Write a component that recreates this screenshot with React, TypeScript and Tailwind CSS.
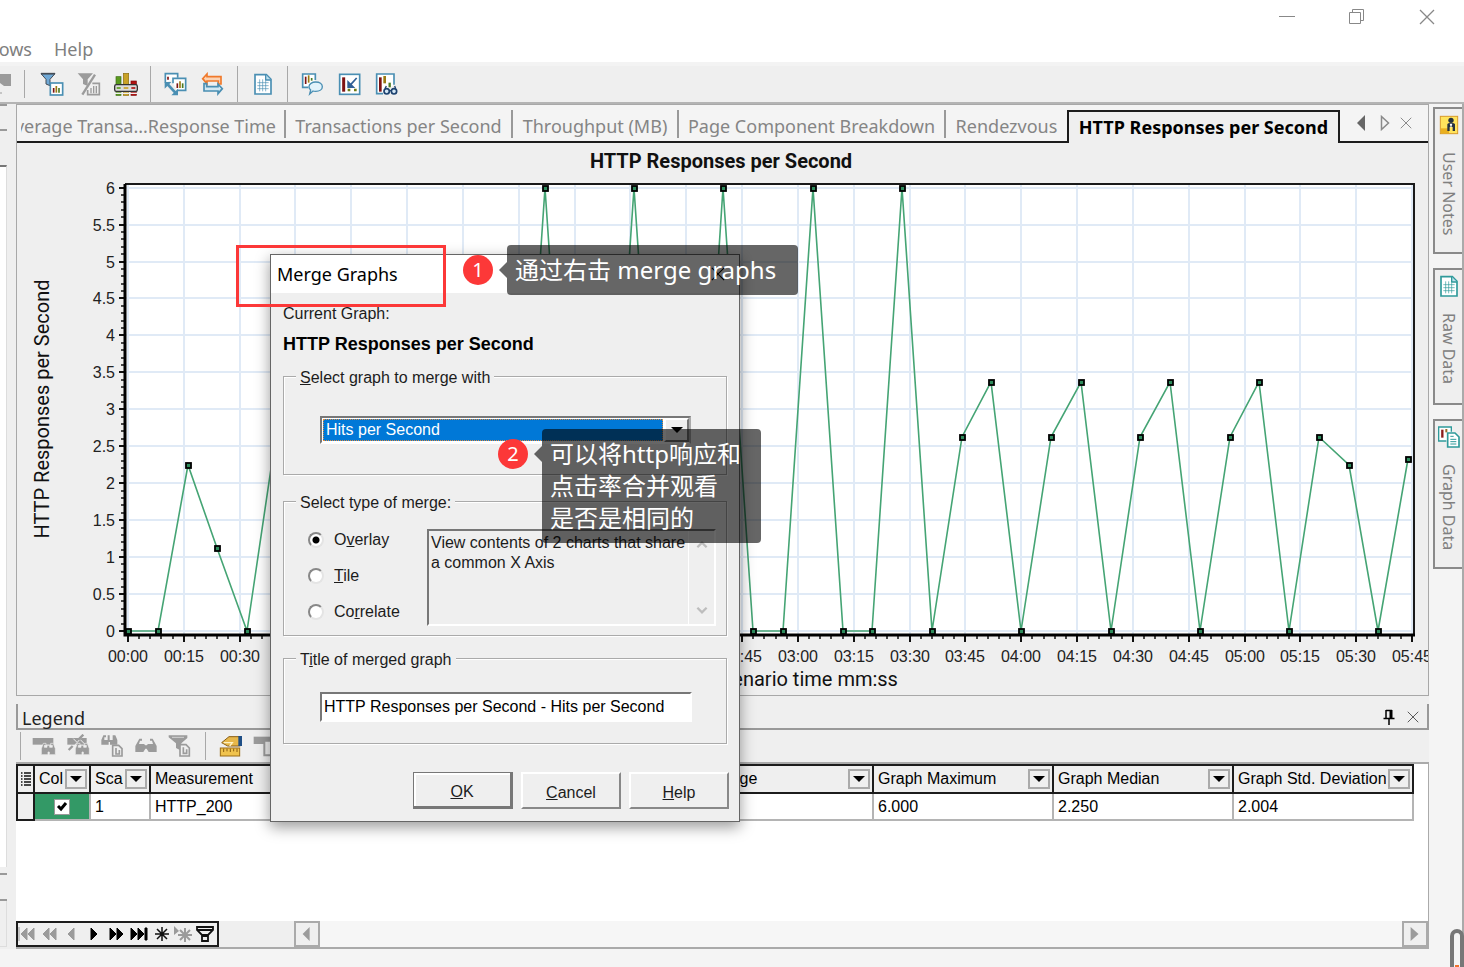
import React from "react";

const UI = "font-['Noto_Sans','Noto_Sans_CJK_SC',sans-serif]";
const BLUE = "#4a8fb3";
const GREY = "#9b9b9b";

/* ---------- icons ---------- */

interface GlyphProps {
  children: React.ReactNode;
}

const Glyph = ({ children }: GlyphProps) => (
  <svg viewBox="0 0 72 72" fill="none" aria-hidden="true" className="h-6 w-6 shrink-0">
    {children}
  </svg>
);

const MiniBars = ({ x, y }: { x: number; y: number }) => (
  <g strokeWidth="5">
    <path d={`M${x} ${y + 6}v14`} stroke="#7d1212" />
    <path d={`M${x + 8} ${y}v20`} stroke="#9a7b12" />
    <path d={`M${x + 16} ${y + 6}v14`} stroke="#4c7a22" />
  </g>
);

const FilterIcon = () => (
  <Glyph>
    <path d="M3 5h42L30 22v19l-12-5V22z" fill="#6fa8d6" stroke="#454c55" strokeWidth="3" />
    <path d="M3 5h42" stroke="#454c55" strokeWidth="5" />
    <rect x="31" y="33" width="37" height="36" fill="#fff" stroke={BLUE} strokeWidth="5" />
    <MiniBars x={41} y={42} />
  </Glyph>
);

const FilterOffIcon = () => (
  <Glyph>
    <path d="M2 4h46L32 22v20l-14-6V22z" fill={GREY} />
    <path d="M54 8 16 68" stroke={GREY} strokeWidth="7" />
    <path d="M46 34h21v34H32V54" stroke={GREY} strokeWidth="5" />
    <path d="M42 48v16M50 42v22M58 42v22" stroke={GREY} strokeWidth="4" />
  </Glyph>
);

const GranularityIcon = () => (
  <Glyph>
    <rect x="6" y="14" width="15" height="56" fill="#5a9a1e" stroke="#3c6d12" strokeWidth="2" />
    <rect x="28" y="4" width="16" height="66" fill="#c9a227" stroke="#8a6c10" strokeWidth="2" />
    <rect x="51" y="27" width="16" height="43" fill="#b01313" stroke="#7c0808" strokeWidth="2" />
    <path d="M0 64h72" stroke="#efefef" strokeWidth="4" />
    <rect x="2" y="38" width="68" height="20" rx="5" fill="#dcdcdc" stroke="#333" strokeWidth="4" />
    <path d="M8 48h12" stroke="#5a9a1e" strokeWidth="5" />
    <path d="M29 48h14" stroke="#c9a227" strokeWidth="5" />
    <path d="M52 48h12" stroke="#b01313" strokeWidth="5" />
  </Glyph>
);

const MergeIcon = () => (
  <Glyph>
    <path d="M4 32V5h37v12" fill="#fff" stroke={BLUE} strokeWidth="5" />
    <path d="M12 14v9" stroke="#7d1212" strokeWidth="5" />
    <path d="M27 34V19h38v36H40" fill="#fff" stroke={BLUE} strokeWidth="5" />
    <MiniBars x={40} y={28} />
    <path d="m10 36 26 28" stroke={BLUE} strokeWidth="8" />
    <path d="M2 30h20L2 50zM42 70H22l20-20z" fill={BLUE} />
  </Glyph>
);

const SwapIcon = () => (
  <Glyph>
    <path d="M18 6v8h42v22h-8v-9H18v8L5 20z" fill="#fbd3b4" stroke="#f0792b" strokeWidth="5" />
    <path d="M51 65v-8H9V35h8v9h34v-8l13 14z" fill="#d3e8f2" stroke={BLUE} strokeWidth="5" />
  </Glyph>
);

const SheetIcon = ({ color = BLUE }: { color?: string }) => (
  <Glyph>
    <path d="M12 8h34l14 14v44H12z" fill="#fff" stroke={color} strokeWidth="5" />
    <path d="M44 8v16h16" fill="#bfe0ee" stroke={color} strokeWidth="4" />
    <path d="M19 32h34M19 41h34M19 50h34M26 22v36M35 22v36M44 27v31" stroke={color} strokeWidth="2" />
  </Glyph>
);

const CommentIcon = () => (
  <Glyph>
    <path d="M22 46H5V6h38v18" fill="#fff" stroke={BLUE} strokeWidth="5" />
    <path d="M14 14v22" stroke="#7d1212" strokeWidth="5" />
    <path d="M23 10v22" stroke="#9a7b12" strokeWidth="5" />
    <path d="M32 18v8" stroke="#4c7a22" strokeWidth="5" />
    <path
      d="M44 30c12 0 20 6 20 14s-8 14-20 14c-3 0-6 0-8-1l-10 9 3-12c-3-3-5-6-5-10 0-8 9-14 20-14z"
      fill="#e3f3fb"
      stroke={BLUE}
      strokeWidth="4"
    />
  </Glyph>
);

const DrillIcon = () => (
  <Glyph>
    <rect x="5" y="7" width="60" height="60" fill="#fff" stroke={BLUE} strokeWidth="5" />
    <path d="M17 16v43" stroke="#7d1212" strokeWidth="9" />
    <path d="m56 18-18 20" stroke="#2f5f96" strokeWidth="5" />
    <path d="M28 24v24h24z" fill="#2f5f96" />
    <path d="M29 54h8M48 54h8" stroke="#6d7a12" strokeWidth="8" />
  </Glyph>
);

const InspectIcon = () => (
  <Glyph>
    <path d="M24 65H5V6h52v32" fill="#fff" stroke={BLUE} strokeWidth="5" />
    <path d="M16 16v43" stroke="#7d1212" strokeWidth="8" />
    <path d="M29 12v22" stroke="#9a7b12" strokeWidth="8" />
    <path d="M44 32v14" stroke="#4c7a22" strokeWidth="7" />
    <circle cx="35" cy="58" r="8" fill="#d5e7f5" stroke="#1d426f" strokeWidth="5" />
    <circle cx="57" cy="58" r="8" fill="#d5e7f5" stroke="#1d426f" strokeWidth="5" />
    <path d="M30 50l4-8M62 50l-3-8M43 56h6" stroke="#1d426f" strokeWidth="4" />
  </Glyph>
);

const NotesIcon = () => (
  <Glyph>
    <rect x="10" y="10" width="52" height="52" fill="#ffe45c" stroke="#d99b2b" strokeWidth="3" />
    <path d="M12 46h24v15H12z" fill="#e9b020" />
    <circle cx="42" cy="22" r="8" fill="#26323f" />
    <path d="M31 34c0-5 23-5 23 0v20h-7V42h-9v12h-7z" fill="#26323f" />
    <path d="m38 32 4 14 4-14z" fill="#fff" />
  </Glyph>
);

const GraphDataIcon = () => (
  <Glyph>
    <path d="M28 48H5V6h38v14" fill="#fff" stroke="#2f9a9a" strokeWidth="4" />
    <path d="M16 14v24" stroke="#8c1c1c" strokeWidth="7" />
    <path d="M28 12v10" stroke="#9a6c2c" strokeWidth="6" />
    <path d="M32 24h22l12 12v30H32z" fill="#fff" stroke="#2f9a9a" strokeWidth="5" />
    <path d="M40 34h10M40 43h18M40 50h18M40 57h18" stroke="#2f9a9a" strokeWidth="3" />
  </Glyph>
);

const Glasses = ({ x, y }: { x: number; y: number }) => (
  <path
    d={`M${x + 6} ${y}h8v6h-5v6h8v-6h8v6h8v-6h-5v-6h8l6 16v18H${x + 24}v-8h-4v8H${x}V${y + 16}z`}
    fill={GREY}
    stroke="#efefef"
    strokeWidth="2"
  />
);

const legendIcons = [
  <Glyph>
    <path d="M2 12h62v20H2z" fill={GREY} />
    <Glasses x={28} y={28} />
  </Glyph>,
  <Glyph>
    <path d="M4 12h58v20H4z" fill={GREY} />
    <path d="M56 0 8 54M22 14l10 10M44 18l12 12" stroke="#efefef" strokeWidth="3" />
    <path d="m52 2-14 14M20 36 8 48" stroke={GREY} strokeWidth="7" />
    <Glasses x={28} y={28} />
  </Glyph>,
  <Glyph>
    <path d="M10 4h8v6h-5v8h10V4h6v14h9V4h8l6 14v14H30v-8h-4v8H4V18z" fill={GREY} />
    <path d="M38 34h18l10 10v22H38z" fill="#efefef" stroke={GREY} strokeWidth="5" />
    <path d="M48 42v18h10V48" stroke={GREY} strokeWidth="5" />
  </Glyph>,
  <Glyph>
    <path d="M16 14h8v6h-6l-3 10h15l4 4h4l4-4h15l-3-10h-6v-6h8l12 22v18H44l-6-10h-4l-6 10H4V36z" fill={GREY} />
  </Glyph>,
  <Glyph>
    <path d="M2 4h56v8L40 28v22l-16-8V28L2 10z" fill={GREY} />
    <path d="M12 10h36" stroke="#efefef" strokeWidth="2" />
    <path d="M36 32h18l10 10v24H36z" fill="#efefef" stroke={GREY} strokeWidth="5" />
    <path d="M46 40v18h10V46" stroke={GREY} strokeWidth="5" />
  </Glyph>,
];

const RulerIcon = () => (
  <Glyph>
    <path d="M8 26 30 8h34v28H26z" fill="#e6b74a" stroke="#8a5d10" strokeWidth="3" />
    <path d="M14 26h26l-8 10" stroke="#fff3c4" strokeWidth="4" />
    <path d="M58 6h11v30H58z" fill="#1f4f86" />
    <rect x="4" y="42" width="58" height="24" fill="#f0c34e" stroke="#9c6d14" strokeWidth="3" />
    <path d="M14 44v10M24 44v8M34 44v10M44 44v8M54 44v10" stroke="#8a5d10" strokeWidth="3" />
  </Glyph>
);

const ColumnsIcon = () => (
  <Glyph>
    <path d="M2 8h62v22H2z" fill={GREY} />
    <path d="M34 20h30v44H34z" fill="#efefef" stroke={GREY} strokeWidth="6" />
  </Glyph>
);

const Triangle = ({ dir, className }: { dir: "left" | "right" | "down"; className: string }) => {
  const points = { left: "11,0 11,16 3,8", right: "3,0 3,16 12,8", down: "2,5 14,5 8,11" }[dir];
  return (
    <svg viewBox="0 0 16 16" aria-hidden="true" className={className}>
      <polygon points={points} fill="currentColor" />
    </svg>
  );
};

const CrossIcon = ({ className }: { className: string }) => (
  <svg viewBox="0 0 16 16" aria-hidden="true" className={className}>
    <path d="M1 1l14 14M15 1 1 15" stroke="currentColor" strokeWidth="1.3" fill="none" />
  </svg>
);

/* ---------- window chrome ---------- */

const WindowHeader = () => (
  <header className="h-[62px] bg-white">
    <div className="flex h-[33px] justify-end pr-0.5 text-[#888]">
      <button aria-label="Minimize" className="flex w-[70px] items-center justify-center">
        <svg viewBox="0 0 16 16" className="h-4 w-4">
          <path d="M0 7.5h16" stroke="currentColor" />
        </svg>
      </button>
      <button aria-label="Restore" className="flex w-[70px] items-center justify-center">
        <svg viewBox="0 0 16 16" fill="none" className="h-4 w-4">
          <path d="M.5 3.5h11v11H.5zM3.500 3.500V.5h11v11h-3" stroke="currentColor" />
        </svg>
      </button>
      <button aria-label="Close" className="flex w-[70px] items-center justify-center">
        <CrossIcon className="h-4 w-4" />
      </button>
    </div>
    <nav className="flex gap-[22px] pt-0.5 text-[18px] leading-7 text-[#808080]">
      <button className="flex w-8 justify-end overflow-hidden">Windows</button>
      <button>Help</button>
    </nav>
  </header>
);

const Divider = () => <span className="mx-1.5 h-full w-px bg-[#a8a8a8]" />;

const ToolButton = ({ label, children }: { label: string; children: React.ReactNode }) => (
  <button aria-label={label} className="flex h-full w-[37px] items-center justify-center">
    {children}
  </button>
);

const Toolbar = () => (
  <div className="flex h-[42px] items-center border-t-4 border-b-2 border-t-[#f3f3f3] border-b-[#b4b4b4] bg-[#efefef]">
    <svg viewBox="0 0 12 24" aria-hidden="true" className="h-6 w-3">
      <path d="M0 2h11v12H4l-4-3z" fill={GREY} />
      <path d="M0 21h2" stroke={GREY} />
    </svg>
    <span className="mr-2 ml-3 h-7 w-px bg-[#a8a8a8]" />
    <ToolButton label="Set filter"><FilterIcon /></ToolButton>
    <ToolButton label="Clear filter"><FilterOffIcon /></ToolButton>
    <ToolButton label="Set granularity"><GranularityIcon /></ToolButton>
    <Divider />
    <ToolButton label="Merge graphs"><MergeIcon /></ToolButton>
    <ToolButton label="Auto correlate"><SwapIcon /></ToolButton>
    <Divider />
    <ToolButton label="Raw data"><SheetIcon /></ToolButton>
    <Divider />
    <ToolButton label="Add comment"><CommentIcon /></ToolButton>
    <ToolButton label="Drill down"><DrillIcon /></ToolButton>
    <ToolButton label="View measurements"><InspectIcon /></ToolButton>
  </div>
);

const idleTab = "h-7 border-r-2 border-[#999] pt-1 leading-6 whitespace-nowrap";

const TabStrip = () => (
  <div className="flex h-[38px] items-end bg-[#f4f4f4] text-[18px] text-[#858585]">
    <div className="flex h-full min-w-0 flex-1 items-end border-b-2 border-[#1c1c1c] pb-[3px] pl-1">
      <button className={`flex w-[265px] justify-end overflow-hidden pr-2 ${idleTab}`}>Average Transa...Response Time</button>
      <button className={`w-[227px] ${idleTab}`}>Transactions per Second</button>
      <button className={`w-[166px] ${idleTab}`}>Throughput (MB)</button>
      <button className={`w-[267px] ${idleTab}`}>Page Component Breakdown</button>
      <button className="h-7 w-[121px] pt-1 leading-6 whitespace-nowrap">Rendezvous</button>
    </div>
    <button className="h-[33px] w-[273px] border-2 border-b-0 border-[#1c1c1c] bg-[#efefef] font-bold whitespace-nowrap text-black">
      HTTP Responses per Second
    </button>
    <div className="flex h-full w-[88px] items-center gap-[7px] border-b-2 border-[#1c1c1c] pl-3.5 text-[#666]">
      <button aria-label="Previous tab"><Triangle dir="left" className="h-4 w-4" /></button>
      <button aria-label="Next tab">
        <svg viewBox="0 0 16 16" fill="none" className="h-4 w-4">
          <path d="M4.500 1.500v13l7-6.500z" stroke="#8a8a8a" strokeWidth="1.500" />
        </svg>
      </button>
      <button aria-label="Close tab"><CrossIcon className="h-3 w-3 text-[#888]" /></button>
    </div>
  </div>
);

/* ---------- chart ---------- */

// [seconds into the scenario, responses per second]
const samples: [number, number][] = [
  [0, 0], [8, 0], [16, 2.25], [24, 1.125], [32, 0], [40, 2.75], [48, 1.125], [56, 0],
  [64, 2.25], [72, 1.125], [80, 0], [88, 2.25], [96, 0], [104, 0], [112, 6], [120, 0],
  [128, 0], [136, 6], [144, 0], [152, 0], [160, 6], [168, 0], [176, 0], [184, 6],
  [192, 0], [200, 0], [208, 6], [216, 0], [224, 2.625], [232, 3.375], [240, 0],
  [248, 2.625], [256, 3.375], [264, 0], [272, 2.625], [280, 3.375], [288, 0],
  [296, 2.625], [304, 3.375], [312, 0], [320, 2.625], [328, 2.25], [336, 0], [344, 2.33],
];

const sx = (t: number) => Math.round(111 + t * 3.7217);
const sy = (v: number) => Math.round(488 - v * 73.9);
const clock = (t: number) =>
  `${String(Math.floor(t / 60)).padStart(2, "0")}:${String(t % 60).padStart(2, "0")}`;

const xMajor = Array.from({ length: 24 }, (_, i) => i * 15);
const xMinor = Array.from({ length: 116 }, (_, i) => i * 3);
const yMajor = Array.from({ length: 13 }, (_, i) => i / 2);
const yMinor = Array.from({ length: 61 }, (_, i) => i / 10);

const Chart = () => (
  <svg viewBox="0 0 1411 552" role="img" aria-label="HTTP Responses per Second" className="block w-full">
    <rect x="108" y="41" width="1288" height="451" fill="#fff" />
    <g stroke="#e0eaf6" strokeWidth="2">
      {xMajor.map((t) => (
        <path key={t} d={`M${sx(t)} 42V491`} />
      ))}
      {yMajor.map((v) => (
        <path key={v} d={`M108 ${sy(v)}H1396`} />
      ))}
    </g>
    <g stroke="#111">
      {xMajor.map((t) => (
        <path key={t} d={`M${sx(t)} 491v8`} strokeWidth="2" />
      ))}
      {xMinor.map((t) => (
        <path key={t} d={`M${sx(t)} 491v5`} strokeWidth="1.500" />
      ))}
      {yMajor.map((v) => (
        <path key={v} d={`M102 ${sy(v)}h6`} strokeWidth="2" />
      ))}
      {yMinor.map((v) => (
        <path key={v} d={`M104 ${sy(v)}h4`} strokeWidth="1.500" />
      ))}
    </g>
    <path d="M108 41H1397V492" fill="none" stroke="#1a1a1a" strokeWidth="2" />
    <path d="M108 41V492H1398" fill="none" stroke="#000" strokeWidth="3" />
    <polyline
      points={samples.map(([t, v]) => `${sx(t)},${sy(v)}`).join(" ")}
      fill="none"
      stroke="#45a474"
      strokeWidth="1.600"
    />
    {samples.map(([t, v]) => (
      <rect key={t} x={sx(t) - 2} y={sy(v) - 2} width="5" height="5" fill="#2e8b5c" stroke="#000" strokeWidth="1.800" />
    ))}
    <g className="font-['Liberation_Sans',sans-serif] text-[16px]" fill="#222">
      {yMajor.map((v) => (
        <text key={v} x="98" y={sy(v) + 6} textAnchor="end">{v}</text>
      ))}
      {xMajor.map((t) => (
        <text key={t} x={sx(t)} y="519" textAnchor="middle">{clock(t)}</text>
      ))}
    </g>
    <g className="font-['Roboto',sans-serif] text-[20px]" fill="#111">
      <text x="704" y="25" textAnchor="middle" className="font-['Roboto',sans-serif] text-[20px] font-bold">
        HTTP Responses per Second
      </text>
      <text x="750" y="543" textAnchor="middle">Elapsed scenario time mm:ss</text>
      <text transform="translate(32 266) rotate(-90)" textAnchor="middle">HTTP Responses per Second</text>
    </g>
  </svg>
);

/* ---------- legend ---------- */

interface HeadCellProps {
  label: string;
  className: string;
}

const HeadCell = ({ label, className }: HeadCellProps) => (
  <th className={`h-7 border-2 border-[#1c1c1c] bg-[#efefef] p-0 font-normal ${className}`}>
    <div className="flex items-center gap-0.5 pr-0.5 pl-1">
      <span className="min-w-0 flex-1 overflow-hidden text-left whitespace-nowrap">{label}</span>
      <button aria-label={`Filter ${label}`} className="flex h-5 w-[22px] shrink-0 items-center justify-center border-2 border-[#aaa]">
        <Triangle dir="down" className="h-4 w-4" />
      </button>
    </div>
  </th>
);

const cell = "border-r-2 border-b-2 border-[#b4b4b4] p-0 pl-1";

const LegendTable = () => (
  <table className="w-[1398px] table-fixed border-collapse font-['Liberation_Sans',sans-serif] text-[16px] leading-6 text-black">
    <thead>
      <tr>
        <th className="w-[17px] border-2 border-[#1c1c1c] bg-[#efefef] p-0">
          <svg viewBox="0 0 12 16" aria-label="Columns" className="mx-auto h-4 w-3">
            <path d="M4 2h7M4 5h7M4 8h7M4 11h7M4 14h7" stroke="#111" strokeWidth="1.500" />
            <path d="M1 2h1.500M1 5h1.500M1 8h1.500M1 11h1.500M1 14h1.500" stroke="#111" strokeWidth="1.500" />
          </svg>
        </th>
        <HeadCell label="Color" className="w-[56px]" />
        <HeadCell label="Scale" className="w-[60px]" />
        <HeadCell label="Measurement" className="w-[363px]" />
        <HeadCell label="Minimum" className="w-[180px]" />
        <HeadCell label="Average" className="w-[180px]" />
        <HeadCell label="Graph Maximum" className="w-[180px]" />
        <HeadCell label="Graph Median" className="w-[180px]" />
        <HeadCell label="Graph Std. Deviation" className="w-[180px]" />
      </tr>
    </thead>
    <tbody>
      <tr>
        <td className="h-[27px] border-2 border-[#1c1c1c] bg-[#efefef] p-0" />
        <td className="border-r-2 border-b-2 border-[#b4b4b4] bg-[#339966] p-0">
          <label className="relative mx-auto flex h-4 w-4 items-center">
            <input type="checkbox" defaultChecked aria-label="Show HTTP_200" className="h-4 w-4 appearance-none border border-[#999] bg-white" />
            <svg viewBox="0 0 16 16" aria-hidden="true" className="pointer-events-none absolute inset-0">
              <path d="m4 7 3 3 5-6" stroke="#000" strokeWidth="3" fill="none" />
            </svg>
          </label>
        </td>
        <td className={cell}>1</td>
        <td className={cell}>HTTP_200</td>
        <td className={cell}>0.000</td>
        <td className={cell} />
        <td className={cell}>6.000</td>
        <td className={cell}>2.250</td>
        <td className={cell}>2.004</td>
      </tr>
    </tbody>
  </table>
);

const navItems = [
  { label: "First", d: "M1 2v14M9 3v12L3 9zM16 3v12l-6-6z", tone: "text-[#9b9b9b]" },
  { label: "Page back", d: "M9 3v12L3 9zM16 3v12l-6-6z", tone: "text-[#9b9b9b]" },
  { label: "Previous", d: "M12 3v12L6 9z", tone: "text-[#9b9b9b]" },
  { label: "Next", d: "M7 3v12l6-6z", tone: "text-black" },
  { label: "Page forward", d: "M4 3v12l6-6zM11 3v12l6-6z", tone: "text-black" },
  { label: "Last", d: "M2 3v12l6-6zM9 3v12l6-6zM16 3h2v12h-2z", tone: "text-black" },
];

const NavBar = () => (
  <div className="flex h-[26px] items-stretch bg-[#efefef]">
    <div className="flex w-[203px] items-center border-2 border-[#1c1c1c]">
      {navItems.map((item) => (
        <button key={item.label} aria-label={item.label} className={`flex-1 ${item.tone}`}>
          <svg viewBox="0 0 20 18" className="h-[18px] w-5">
            <path d={item.d} fill="currentColor" stroke="currentColor" strokeWidth="1" />
          </svg>
        </button>
      ))}
      <button aria-label="Bookmark" className="flex-1">
        <svg viewBox="0 0 20 18" className="h-[18px] w-5">
          <path d="M11 2v14M4 9h14M6 4l10 10M16 4 6 14" stroke="#111" strokeWidth="1.500" />
        </svg>
      </button>
      <button aria-label="Go to bookmark" className="flex-1">
        <svg viewBox="0 0 20 18" className="h-[18px] w-5">
          <path d="M1 1v9l5-4z" fill={GREY} />
          <path d="M12 3v14M5 10h14M7 5l10 10M17 5 7 15" stroke={GREY} strokeWidth="2" />
        </svg>
      </button>
      <button aria-label="Filter" className="flex-1">
        <svg viewBox="0 0 20 18" className="h-[18px] w-5">
          <path d="M2 2h16v3l-5 5H7L2 5zM2 5h16M7 11h6v5H7z" fill="none" stroke="#111" strokeWidth="1.800" />
        </svg>
      </button>
    </div>
    <div className="w-[75px]" />
    <button aria-label="Scroll left" className="flex w-[26px] items-center justify-center border-2 border-[#aaa] text-[#9b9b9b]">
      <Triangle dir="left" className="h-3.5 w-3.5" />
    </button>
    <div className="flex-1 bg-[#f6f6f6]" />
    <button aria-label="Scroll right" className="flex w-[26px] items-center justify-center border-2 border-[#aaa] text-[#9b9b9b]">
      <Triangle dir="right" className="h-3.5 w-3.5" />
    </button>
  </div>
);

const Legend = () => (
  <section className="mt-2 flex flex-1 flex-col">
    <div className="flex h-[26px] items-center justify-between border-x-2 border-b-2 border-[#999] bg-[#efefef] pr-2 pl-1">
      <h2 className="pt-1 text-[18px] leading-6 text-[#222]">Legend</h2>
      <div className="flex items-center gap-3 pt-0.5">
        <button aria-label="Pin">
          <svg viewBox="0 0 12 16" fill="none" className="h-4 w-3">
            <path d="M3 1v8M3 1.500h6M.5 9.500h11M6 10v6" stroke="#000" strokeWidth="1.500" />
            <path d="M8 1v8" stroke="#000" strokeWidth="3" />
          </svg>
        </button>
        <button aria-label="Close legend"><CrossIcon className="h-3 w-3 text-[#555]" /></button>
      </div>
    </div>
    <div className="flex h-8 items-center bg-[#efefef] pl-1">
      <span className="mr-1.5 h-7 w-px bg-[#a8a8a8]" />
      {legendIcons.map((icon, i) => (
        <button key={i} aria-label={`Legend tool ${i + 1}`} className="flex w-[34px] justify-center">
          {icon}
        </button>
      ))}
      <span className="mx-2 h-7 w-px bg-[#a8a8a8]" />
      <button aria-label="Configure measurements" className="flex w-[34px] justify-center"><RulerIcon /></button>
      <button aria-label="Configure columns" className="flex w-[34px] justify-center"><ColumnsIcon /></button>
    </div>
    <div className="flex flex-1 flex-col justify-between overflow-hidden border border-t-2 border-b-2 border-l-0 border-[#aaa] bg-white">
      <LegendTable />
      <NavBar />
    </div>
  </section>
);

/* ---------- side panels ---------- */

const LeftPane = () => (
  <aside className="flex w-2 shrink-0 flex-col">
    <div className="h-[27px] w-[7px] border-y-2 border-[#999]" />
    <div className="mt-[34px] h-[702px] w-[7px] border-t-2 border-r border-t-[#777] border-r-[#ddd] bg-white" />
    <div className="mt-1.5 h-7 w-[7px] border-y-2 border-[#999]" />
    <div className="h-[46px] w-[7px] border-r border-b border-[#ddd]" />
  </aside>
);

const SideTab = ({ label, icon, className }: { label: string; icon: React.ReactNode; className: string }) => (
  <button className={`flex flex-col items-center border-2 border-r-0 border-[#8a8a8a] bg-[#efefef] pt-1 ${className}`}>
    {icon}
    <span className="leading-6 [writing-mode:vertical-rl]">{label}</span>
  </button>
);

const SideTabs = () => (
  <aside className="flex w-[35px] shrink-0 flex-col gap-[14px] border-r-2 border-[#aaa] pt-[3px] pl-1 text-[16px] text-[#808080]">
    <SideTab label="User Notes" className="h-[147px] gap-[15px]" icon={<NotesIcon />} />
    <SideTab label="Raw Data" className="h-[137px] gap-[15px]" icon={<SheetIcon color="#2f9a9a" />} />
    <SideTab label="Graph Data" className="h-[150px] gap-[15px]" icon={<GraphDataIcon />} />
  </aside>
);

/* ---------- dialog ---------- */

const Group = ({ legend, className, children }: { legend: React.ReactNode; className: string; children: React.ReactNode }) => (
  <fieldset className={`border border-[#aaa] shadow-[1px_1px_0_#fff,inset_1px_1px_0_#fff] ${className}`}>
    <legend className="ml-3 bg-[#efefef] px-1 pt-1 leading-5">{legend}</legend>
    {children}
  </fieldset>
);

const modes = [
  { id: "overlay", text: <>O<u>v</u>erlay</> },
  { id: "tile", text: <><u>T</u>ile</> },
  { id: "correlate", text: <>Co<u>r</u>relate</> },
];

const raised =
  "h-[37px] w-[100px] border-2 border-t-white border-l-white border-r-[#888] border-b-[#888] bg-[#efefef] pt-1";

const MergeDialog = () => (
  <div
    role="dialog"
    aria-label="Merge Graphs"
    className="absolute top-[254px] left-[270px] w-[470px] border border-[#666] bg-[#efefef] font-['Liberation_Sans',sans-serif] text-[16px] text-[#1c1c1c] shadow-[0_5px_14px_rgba(0,0,0,0.4)]"
  >
    <div className={`flex h-[38px] items-center justify-between bg-white pr-3.5 pl-1.5 text-black ${UI}`}>
      <h1 className="text-[18px] leading-6">Merge Graphs</h1>
      <button aria-label="Close dialog"><CrossIcon className="h-3.5 w-3.5" /></button>
    </div>
    <div className="px-3 pt-[11px] pb-3">
      <p className="leading-5">Current Graph:</p>
      <p className="mt-2.5 text-[18px] leading-5 font-bold text-black">HTTP Responses per Second</p>
      <Group className="mt-2.5 h-[111px]" legend={<label htmlFor="graph"><u>S</u>elect graph to merge with</label>}>
        <div className="mt-7 ml-9 flex h-7 w-[371px] border-2 border-t-[#777] border-r-[#aaa] border-b-white border-l-[#777] bg-white">
          <div className="flex flex-1 p-px">
            <select
              id="graph"
              className="w-full appearance-none border border-dotted border-[#e08a3c] bg-[#0078d7] pl-0.5 leading-5 text-white"
            >
              <option>Hits per Second</option>
            </select>
          </div>
          <span className="flex w-[25px] items-center justify-center border-2 border-t-white border-r-[#777] border-b-[#777] border-l-white bg-[#efefef]">
            <Triangle dir="down" className="h-4 w-4 text-black" />
          </span>
        </div>
      </Group>
      <Group className="mt-3.5 h-[147px]" legend="Select type of merge:">
        <div className="flex">
          <div className="flex w-[143px] flex-col gap-4 pt-[17px] pl-6">
            {modes.map((mode) => (
              <label key={mode.id} className="flex items-center gap-2.5 leading-5">
                <input
                  type="radio"
                  name="mode"
                  defaultChecked={mode.id === "overlay"}
                  className="h-4 w-4 appearance-none rounded-full border-2 border-t-[#888] border-r-[#e4e4e4] border-b-[#e4e4e4] border-l-[#888] bg-white checked:bg-[radial-gradient(circle,#000_0_3px,#fff_4px)]"
                />
                <span>{mode.text}</span>
              </label>
            ))}
          </div>
          <div className="mt-4 flex h-[97px] w-[289px] border-2 border-t-[#777] border-r-white border-b-white border-l-[#777]">
            <textarea
              readOnly
              aria-label="Merge type description"
              className="h-full flex-1 resize-none overflow-hidden pt-0.5 pl-0.5 leading-5"
              defaultValue="View contents of 2 charts that share a common X Axis"
            />
            <div className="flex w-[26px] flex-col items-center justify-between border-l border-white py-2">
              {["M2 9l5-5 5 5", "M2 4l5 5 5-5"].map((d) => (
                <svg key={d} viewBox="0 0 14 13" aria-hidden="true" className="h-3 w-3.5">
                  <path d={d} fill="none" stroke="#bdbdbd" strokeWidth="2.500" />
                </svg>
              ))}
            </div>
          </div>
        </div>
      </Group>
      <Group className="mt-2.5 h-[98px]" legend={<label htmlFor="title">T<u>i</u>tle of merged graph</label>}>
        <input
          id="title"
          type="text"
          defaultValue="HTTP Responses per Second - Hits per Second"
          className="mt-[22px] ml-9 h-[30px] w-[372px] border-2 border-t-[#777] border-r-white border-b-white border-l-[#777] bg-white pl-0.5 text-black"
        />
      </Group>
      <div className="-mr-0.5 mt-7 flex justify-end gap-2">
        <button className="h-[37px] w-[100px] border border-r-3 border-b-3 border-[#777] bg-[#efefef] pt-1 shadow-[inset_2px_2px_0_#fff]">
          <u>O</u>K
        </button>
        <button className={raised}><u>C</u>ancel</button>
        <button className={raised}><u>H</u>elp</button>
      </div>
    </div>
  </div>
);

/* ---------- annotations ---------- */

interface CalloutProps {
  step: number;
  place: string;
  children: React.ReactNode;
}

const Callout = ({ step, place, children }: CalloutProps) => (
  <div className={`absolute flex items-start ${place}`}>
    <span className="mt-2.5 flex h-[30px] w-[30px] items-center justify-center rounded-full bg-[#fc3838] text-[20px] text-white">
      {step}
    </span>
    <span className="mt-[17px] ml-1.5 h-0 w-0 border-y-8 border-r-8 border-y-transparent border-r-black/60" />
    <div className="rounded bg-black/60 px-2 py-[9px] text-[24px] leading-8 whitespace-pre-line text-white">
      {children}
    </div>
  </div>
);

export default function App() {
  return (
    <div className={`relative flex min-h-screen flex-col overflow-hidden bg-[#f4f4f4] ${UI}`}>
      <WindowHeader />
      <Toolbar />
      <main className="flex flex-1">
        <div className="mb-[18px] flex min-w-0 flex-1 bg-[#efefef]">
          <LeftPane />
          <div className="ml-2 flex min-w-0 flex-1 flex-col">
            <section className="border border-[#a8a8a8]">
              <TabStrip />
              <Chart />
            </section>
            <Legend />
          </div>
        </div>
        <SideTabs />
      </main>

      <MergeDialog />
      <div className="absolute top-[245px] left-[236px] h-[62px] w-[210px] border-3 border-[#fc3838]" />
      <Callout step={1} place="top-[245px] left-[463px]">
        <span className="pr-3.5">通过右击 merge graphs</span>
      </Callout>
      <Callout step={2} place="top-[429px] left-[498px]">
        <span className="block w-[203px]">{"可以将http响应和\n点击率合并观看\n是否是相同的"}</span>
      </Callout>
      <div className="absolute right-0 bottom-0 flex h-[38px] w-3.5 items-end justify-center rounded-t-full border-4 border-b-0 border-[#777] bg-[#f4f4f4]">
        <span className="h-0.5 w-1 bg-[#f0702b]" />
      </div>
    </div>
  );
}
